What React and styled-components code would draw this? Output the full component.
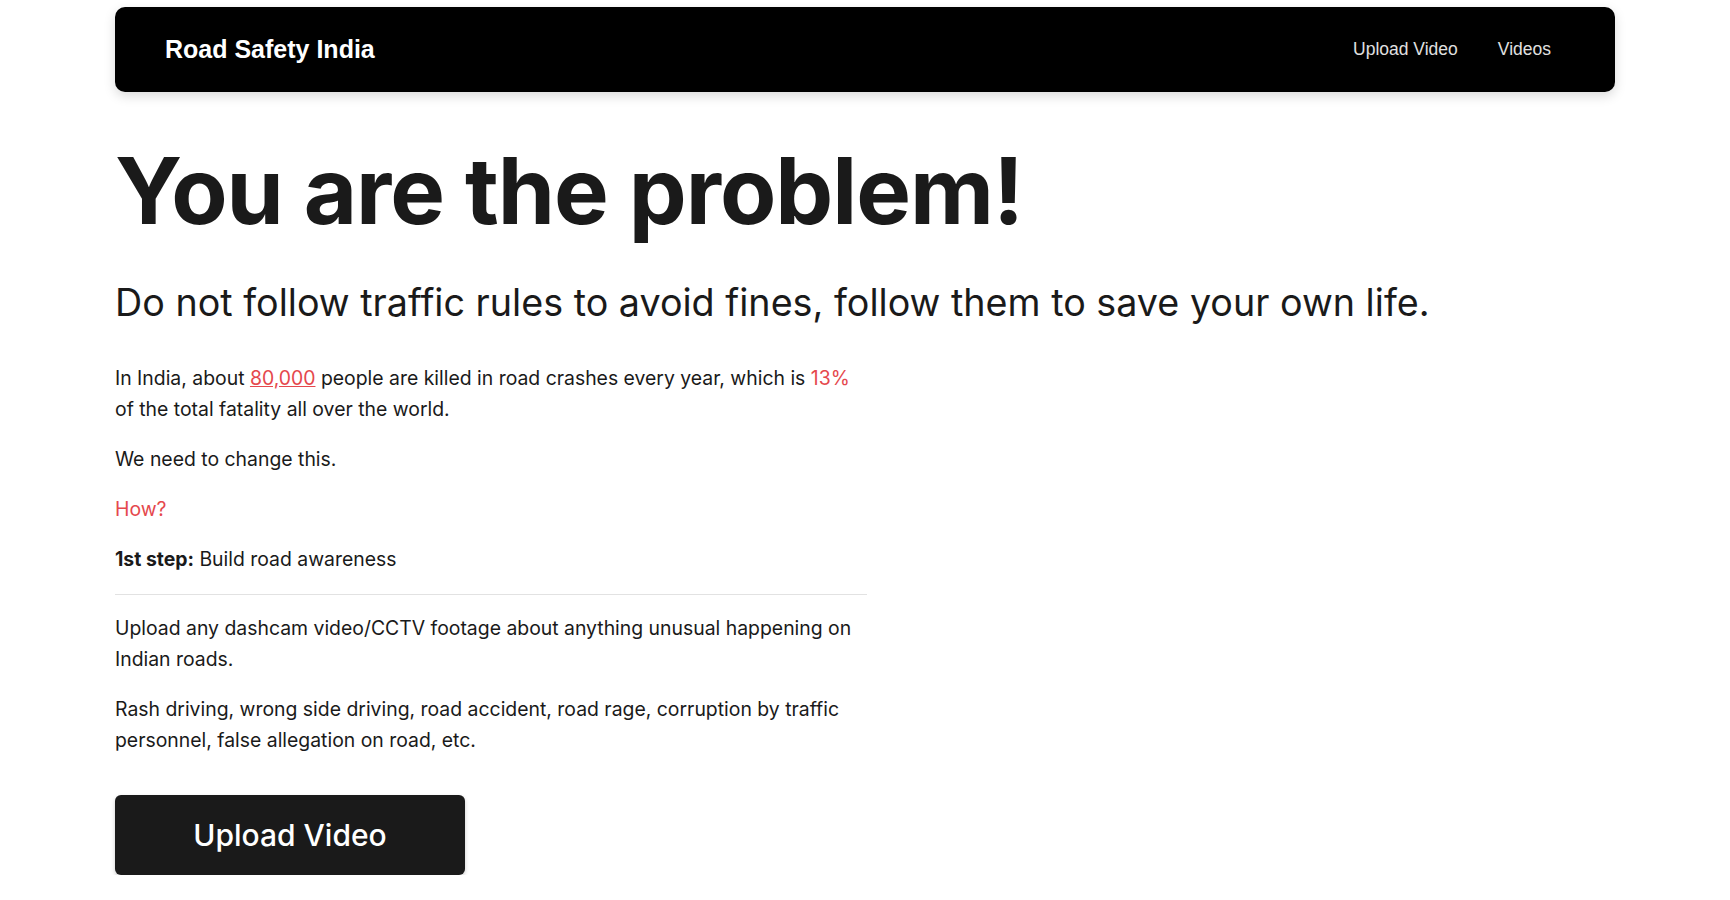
import React from "react";
import styled, { createGlobalStyle } from "styled-components";

const GlobalStyle = createGlobalStyle`
  body {
    margin: 0;
    background: #fff;
    color: #1a1a1a;
    font-family: Inter, "Noto Sans", sans-serif;
  }
`;

function App() {
  return (
    <>
      <GlobalStyle />
      <Page>
        <Navbar>
          <Brand>Road Safety India</Brand>
          <NavLinks>
            <NavLink href="#">Upload Video</NavLink>
            <NavLink href="#">Videos</NavLink>
          </NavLinks>
        </Navbar>
        <Hero>
          <Title>You are the problem!</Title>
          <Subtitle>
            Do not follow traffic rules to avoid fines, follow them to save your own life.
          </Subtitle>
          <Content>
            <Text>
              In India, about <Stat href="#">80,000</Stat> people are killed in road crashes
              every year, which is <Red>13%</Red> of the total fatality all over the world.
            </Text>
            <Text>We need to change this.</Text>
            <Text>
              <Red>How?</Red>
            </Text>
            <Text>
              <strong>1st step:</strong> Build road awareness
            </Text>
            <Divider />
            <Text>
              Upload any dashcam video/CCTV footage about anything unusual happening on
              Indian roads.
            </Text>
            <Text>
              Rash driving, wrong side driving, road accident, road rage, corruption by
              traffic personnel, false allegation on road, etc.
            </Text>
            <UploadButton>Upload Video</UploadButton>
          </Content>
        </Hero>
      </Page>
    </>
  );
}

export default App;

const Page = styled.div`
  max-width: 1500px;
  margin: 0 auto;
  padding-top: 7px;
`;

const Navbar = styled.nav`
  height: 85px;
  background: #000;
  border-radius: 10px;
  box-shadow: 0 4px 12px rgba(0, 0, 0, 0.15);
  display: flex;
  align-items: center;
  justify-content: space-between;
  padding: 0 64px 0 50px;
`;

const Brand = styled.div`
  color: #fff;
  font-family: "Liberation Sans", Arial, sans-serif;
  font-weight: 700;
  font-size: 25px;
`;

const NavLinks = styled.div`
  display: flex;
  gap: 40px;
`;

const NavLink = styled.a`
  color: #e0e0e0;
  text-decoration: none;
  font-family: "Liberation Sans", Arial, sans-serif;
  font-size: 17.5px;
`;

const Hero = styled.main`
  padding-top: 44px;
`;

const Title = styled.h1`
  margin: 0;
  font-size: 92px;
  font-weight: 700;
  line-height: 1.2;
  letter-spacing: -1px;
`;

const Subtitle = styled.h2`
  margin: 32px 0 36px;
  font-size: 37.7px;
  font-weight: 400;
  line-height: 1.3;
`;

const Content = styled.div`
  max-width: 752px;
`;

const Text = styled.p`
  margin: 0 0 19px;
  font-size: 19.4px;
  line-height: 31px;
  strong {
    font-weight: 700;
  }
`;

const Red = styled.span`
  color: #e5484d;
`;

const Stat = styled.a`
  color: #e5484d;
  text-decoration: underline;
`;

const Divider = styled.hr`
  border: none;
  border-top: 1px solid #e2e2e2;
  margin: 18px 0 18px;
`;

const UploadButton = styled.button`
  margin-top: 20px;
  width: 350px;
  height: 80px;
  background: #1a1a1a;
  color: #fff;
  border: none;
  border-radius: 6px;
  box-shadow: 0 2px 4px rgba(0, 0, 0, 0.2);
  font-family: Inter, sans-serif;
  font-size: 30px;
  font-weight: 500;
  cursor: pointer;
`;
